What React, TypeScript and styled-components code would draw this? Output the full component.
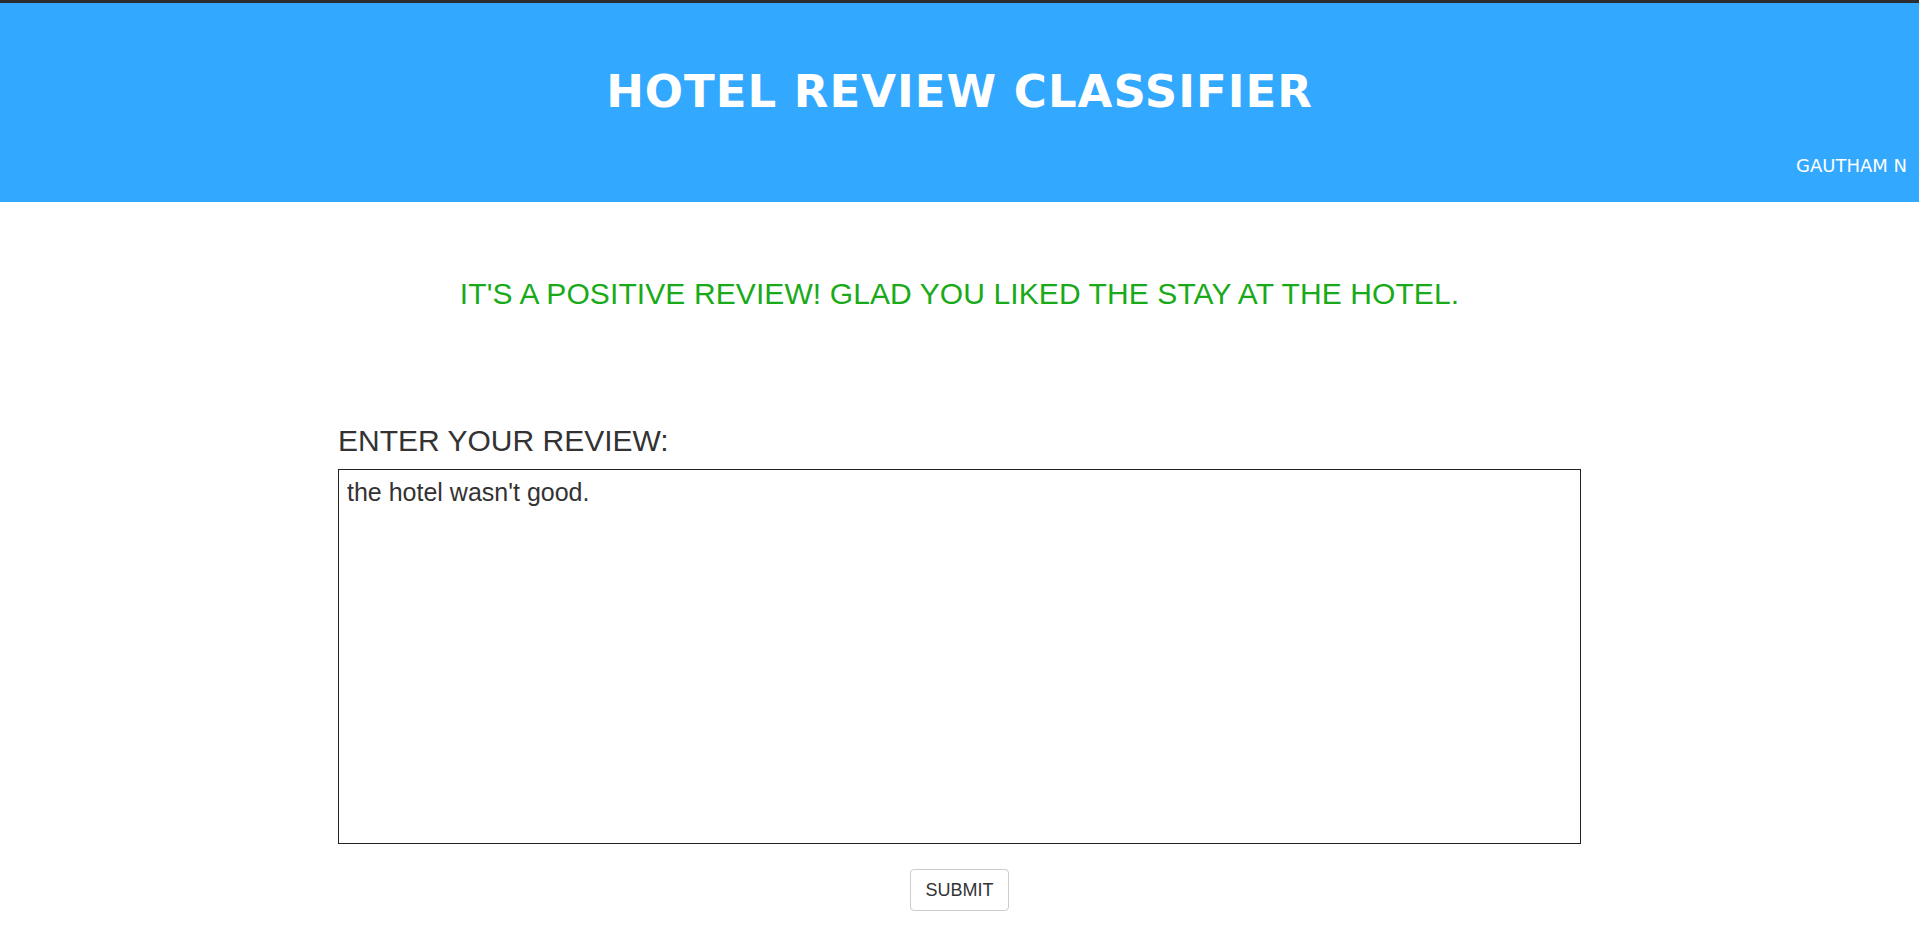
import React from "react";
import styled, { createGlobalStyle } from "styled-components";

const GlobalStyle = createGlobalStyle`
  html, body {
    margin: 0;
    padding: 0;
    background: #ffffff;
  }
  body {
    font-family: "Liberation Sans", Arial, sans-serif;
  }
  * {
    box-sizing: border-box;
  }
`;

const Page = styled.div`
  display: flex;
  flex-direction: column;
  min-height: 100vh;
`;

const Header = styled.header`
  display: flex;
  flex-direction: column;
  height: 202px;
  background: #33a8ff;
  border-top: 3px solid #2b2d31;
`;

const Title = styled.h1`
  margin: 62px 0 0;
  text-align: center;
  font-family: "DejaVu Sans", Verdana, sans-serif;
  font-weight: bold;
  font-size: 45px;
  letter-spacing: 1px;
  line-height: 1.2;
  color: #ffffff;
`;

const Author = styled.div`
  margin-top: auto;
  align-self: flex-end;
  padding: 0 12px 26px 0;
  font-family: "DejaVu Sans", Verdana, sans-serif;
  font-size: 18px;
  line-height: 21px;
  color: #ffffff;
`;

const Main = styled.main`
  display: flex;
  flex-direction: column;
  align-items: center;
  padding-top: 74px;
`;

const Result = styled.h3<{ $positive: boolean }>`
  margin: 0;
  font-size: 30px;
  font-weight: normal;
  line-height: 36px;
  letter-spacing: 0.1px;
  color: ${(p) => (p.$positive ? "#19aa19" : "#d9261c")};
  text-align: center;
`;

const Form = styled.form`
  display: flex;
  flex-direction: column;
  align-items: center;
  width: 1243px;
  margin-top: 111px;
`;

const Label = styled.label`
  align-self: stretch;
  font-size: 30px;
  line-height: 36px;
  color: #333333;
  margin-bottom: 10px;
`;

const ReviewBox = styled.textarea`
  width: 100%;
  height: 375px;
  border: 1px solid #222222;
  border-radius: 0;
  padding: 8px 8px 6px;
  font-family: "Liberation Sans", Arial, sans-serif;
  font-size: 25px;
  color: #333333;
  resize: none;
  outline: none;
`;

const SubmitButton = styled.button`
  margin-top: 25px;
  padding: 10px 14px;
  background: #ffffff;
  border: 1px solid #cccccc;
  border-radius: 4px;
  font-family: "Liberation Sans", Arial, sans-serif;
  font-size: 18px;
  line-height: 20px;
  color: #333333;
  cursor: pointer;
`;

export default function App() {
  return (
    <Page>
      <GlobalStyle />
      <Header>
        <Title>HOTEL REVIEW CLASSIFIER</Title>
        <Author>GAUTHAM N</Author>
      </Header>
      <Main>
        <Result $positive>
          IT'S A POSITIVE REVIEW! GLAD YOU LIKED THE STAY AT THE HOTEL.
        </Result>
        <Form onSubmit={(e) => e.preventDefault()}>
          <Label htmlFor="review">ENTER YOUR REVIEW:</Label>
          <ReviewBox id="review" defaultValue="the hotel wasn't good." />
          <SubmitButton type="submit">SUBMIT</SubmitButton>
        </Form>
      </Main>
    </Page>
  );
}
